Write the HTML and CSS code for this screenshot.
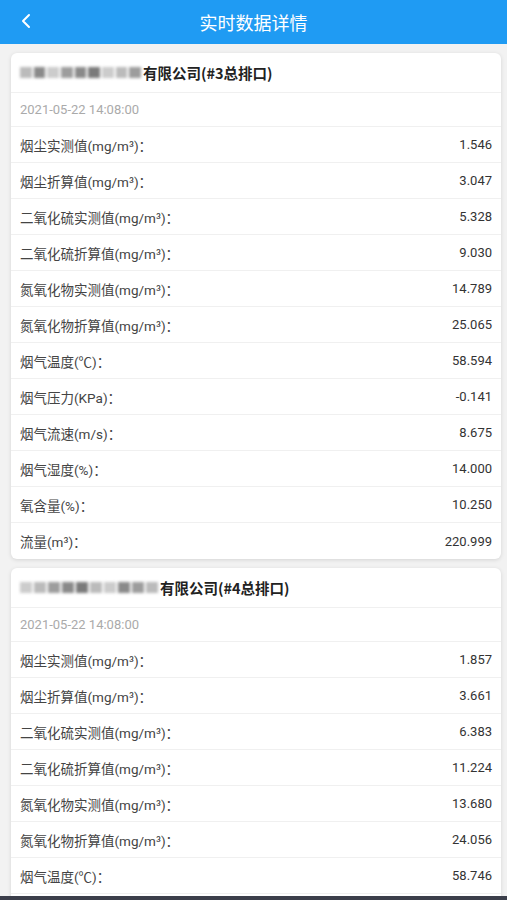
FILE: index.html
```html
<!DOCTYPE html>
<html lang="zh-CN">
<head>
<meta charset="utf-8">
<title>实时数据详情</title>
<link rel="stylesheet" href="styles.css">
</head>
<body>
<header class="topbar">
  <span class="back"><svg width="12" height="16" viewBox="0 0 12 16"><path d="M9 2 L3 8 L9 14" fill="none" stroke="#fff" stroke-width="2" stroke-linecap="round" stroke-linejoin="round"/></svg></span>
  <h1 class="title">实时数据详情</h1>
</header>
<main class="list">
  <section class="card">
    <div class="card-head"><span class="mask"><i class="m1"></i><i class="m2"></i><i class="m3"></i><i class="m4"></i><i class="m2"></i><i class="m5"></i><i class="m3"></i><i class="m1"></i><i class="m4"></i></span>有限公司(#3总排口)</div>
    <div class="card-date">2021-05-22 14:08:00</div>
    <div class="row"><span>烟尘实测值(mg/m³)：</span><span>1.546</span></div>
    <div class="row"><span>烟尘折算值(mg/m³)：</span><span>3.047</span></div>
    <div class="row"><span>二氧化硫实测值(mg/m³)：</span><span>5.328</span></div>
    <div class="row"><span>二氧化硫折算值(mg/m³)：</span><span>9.030</span></div>
    <div class="row"><span>氮氧化物实测值(mg/m³)：</span><span>14.789</span></div>
    <div class="row"><span>氮氧化物折算值(mg/m³)：</span><span>25.065</span></div>
    <div class="row"><span>烟气温度(℃)：</span><span>58.594</span></div>
    <div class="row"><span>烟气压力(KPa)：</span><span>-0.141</span></div>
    <div class="row"><span>烟气流速(m/s)：</span><span>8.675</span></div>
    <div class="row"><span>烟气湿度(%)：</span><span>14.000</span></div>
    <div class="row"><span>氧含量(%)：</span><span>10.250</span></div>
    <div class="row"><span>流量(m³)：</span><span>220.999</span></div>
  </section>
  <section class="card more">
    <div class="card-head"><span class="mask wide"><i class="m3"></i><i class="m1"></i><i class="m4"></i><i class="m2"></i><i class="m5"></i><i class="m1"></i><i class="m3"></i><i class="m2"></i><i class="m4"></i><i class="m1"></i></span>有限公司(#4总排口)</div>
    <div class="card-date">2021-05-22 14:08:00</div>
    <div class="row"><span>烟尘实测值(mg/m³)：</span><span>1.857</span></div>
    <div class="row"><span>烟尘折算值(mg/m³)：</span><span>3.661</span></div>
    <div class="row"><span>二氧化硫实测值(mg/m³)：</span><span>6.383</span></div>
    <div class="row"><span>二氧化硫折算值(mg/m³)：</span><span>11.224</span></div>
    <div class="row"><span>氮氧化物实测值(mg/m³)：</span><span>13.680</span></div>
    <div class="row"><span>氮氧化物折算值(mg/m³)：</span><span>24.056</span></div>
    <div class="row"><span>烟气温度(℃)：</span><span>58.746</span></div>
  </section>
</main>
<div class="bottom-edge"></div>
</body>
</html>
```

FILE: styles.css
```css
* { box-sizing: border-box; }
html, body { margin: 0; padding: 0; }
body {
  background: #f2f2f2;
  font-family: Roboto, "Noto Sans CJK SC", sans-serif;
  color: #333;
  overflow: hidden;
  height: 900px;
}
.topbar {
  height: 44px;
  background: #1f9bf3;
  display: flex;
  align-items: center;
  justify-content: center;
  position: relative;
}
.back {
  position: absolute;
  left: 20px;
  top: 13px;
  display: flex;
}
.title {
  margin: 0;
  font-size: 18px;
  font-weight: normal;
  color: #fff;
  font-family: "Noto Sans CJK SC", sans-serif;
  line-height: 44px;
}
.list {
  padding: 9px 6px 0 11px;
  display: flex;
  flex-direction: column;
  gap: 9px;
}
.card {
  background: #fff;
  border-radius: 6px;
  box-shadow: 0 1px 4px rgba(0,0,0,0.12);
  overflow: hidden;
}
.card.more { padding-bottom: 10px; }
.card-head {
  height: 40px;
  display: flex;
  align-items: center;
  padding: 0 9px;
  font-family: "Noto Sans CJK SC", sans-serif;
  font-weight: bold;
  font-size: 14.5px;
  color: #222;
  border-bottom: 1px solid #f0f0f0;
}
.mask {
  display: inline-flex;
  align-items: center;
  width: 123px;
  height: 16px;
  filter: blur(1.4px);
}
.mask.wide { width: 140px; }
.mask i {
  display: block;
  flex: 1;
  height: 11px;
  margin-right: 2px;
}
.m1 { background: #bbb; }
.m2 { background: #8a8a8a; }
.m3 { background: #ccc; }
.m4 { background: #9d9d9d; }
.m5 { background: #7a7a7a; }
.card-date {
  height: 34px;
  display: flex;
  align-items: center;
  padding: 0 9px;
  font-size: 13px;
  color: #aaa;
  border-bottom: 1px solid #f0f0f0;
}
.row {
  height: 36px;
  display: flex;
  align-items: center;
  justify-content: space-between;
  padding: 0 9px;
  font-size: 13.5px;
  color: #444;
  border-bottom: 1px solid #f0f0f0;
}
.row:last-child { border-bottom: none; }
.card.more .row:last-child { border-bottom: 1px solid #f0f0f0; }
.row span:last-child { color: #333; font-size: 13px; }
.bottom-edge {
  position: fixed;
  left: 0;
  right: 0;
  bottom: 0;
  height: 4px;
  background: #3b3e4a;
}
```
